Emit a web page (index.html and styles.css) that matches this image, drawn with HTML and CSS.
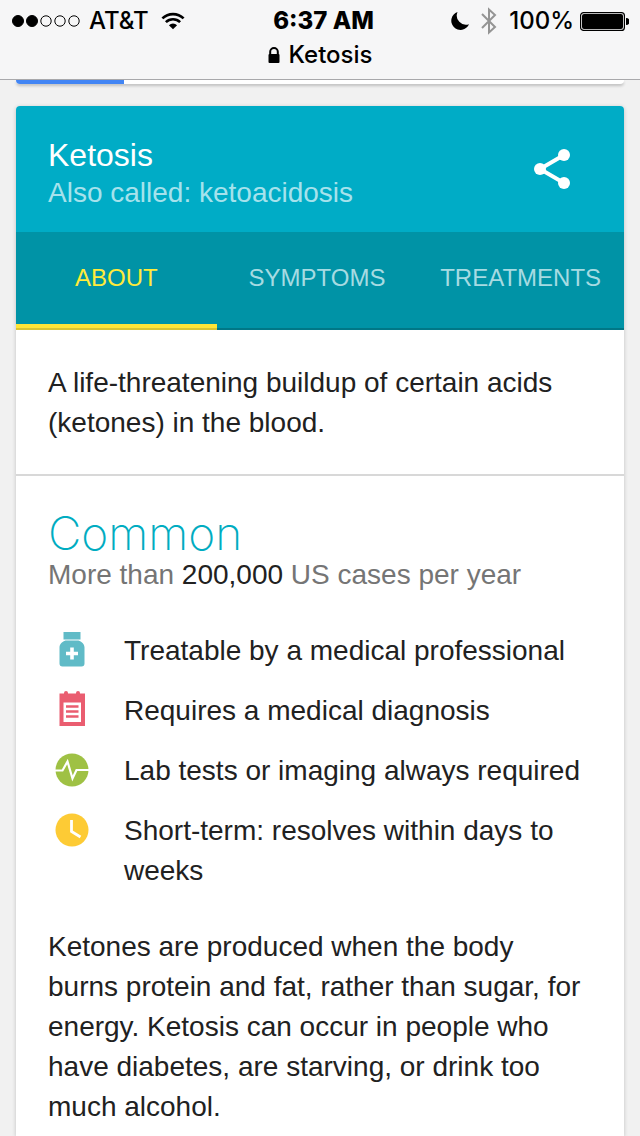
FILE: index.html
```html
<!DOCTYPE html>
<html lang="en">
  <head>
    <meta charset="UTF-8" />
    <meta name="viewport" content="width=device-width, initial-scale=1.0" />
    <title>Ketosis</title>
    <link rel="stylesheet" href="styles.css">
  </head>
  <body>
    <header class="topbar">
      <div class="status">
        <div class="status-left">
          <svg class="signal" width="68" height="12" viewBox="0 0 68 12" fill="none" stroke="#000">
            <circle cx="6" cy="6" r="5.5" fill="#000" />
            <circle cx="20" cy="6" r="5.5" fill="#000" />
            <circle cx="34" cy="6" r="5.2" />
            <circle cx="48" cy="6" r="5.2" />
            <circle cx="62" cy="6" r="5.2" />
          </svg>
          <span>AT&amp;T</span>
          <svg class="wifi" width="24" height="18" viewBox="0 0 26 18" fill="none" stroke="#000" stroke-width="2.8">
            <path d="M1.5 6.2a16.5 16.5 0 0 1 23 0" />
            <path d="M5.3 10.2a11 11 0 0 1 15.4 0" />
            <path d="M13 18l-4.4-4.5a6.4 6.4 0 0 1 8.8 0z" fill="#000" stroke="none" />
          </svg>
        </div>
        <time class="clock">6:37 AM</time>
        <div class="status-right">
          <svg width="18" height="18" viewBox="0 0 18 18">
            <path d="M6.5 0A9.2 9.2 0 1 0 18 12.2 9.2 9.2 0 0 1 6.5 0z" />
          </svg>
          <svg class="bluetooth" width="16" height="28" viewBox="0 0 16 28" fill="none" stroke="#949494" stroke-width="2">
            <path d="M1 7l13 13-6 5.500V2.500L14 8 1 21" />
          </svg>
          <span>100%</span>
          <svg class="battery" width="49" height="19" viewBox="0 0 49 19">
            <rect x=".6" y=".6" width="43.800" height="17.800" rx="3" fill="none" stroke="#000" stroke-width="1.200" />
            <rect x="2" y="2" width="41" height="15" rx="2" />
            <path d="M46 6a3.300 3.300 0 0 1 0 7z" />
          </svg>
        </div>
      </div>
      <div class="address">
        <svg width="12" height="16" viewBox="0 0 12 16">
          <path d="M2.200 8V4.800a3.800 3.800 0 0 1 7.600 0V8" fill="none" stroke="#000" stroke-width="2" />
          <rect x=".5" y="7" width="11" height="9" rx="1" />
        </svg>
        <span>Ketosis</span>
      </div>
    </header>

    <main>
      <div class="search-tabs"><div class="search-tabs-active"></div></div>

      <article class="card">
        <div class="card-head">
          <div>
            <h1>Ketosis</h1>
            <p class="alias">Also called: ketoacidosis</p>
          </div>
          <button class="share" type="button" aria-label="Share">
            <svg width="36" height="40" viewBox="0 0 36 40" fill="#fff">
              <path d="M30 6L6 20l24 14" fill="none" stroke="#fff" stroke-width="4" />
              <circle cx="30" cy="6" r="6" />
              <circle cx="6" cy="20" r="6" />
              <circle cx="30" cy="34" r="6" />
            </svg>
          </button>
        </div>

        <nav class="tabs">
          <a class="tab active" href="#about">ABOUT</a>
          <a class="tab" href="#symptoms">SYMPTOMS</a>
          <a class="tab" href="#treatments">TREATMENTS</a>
        </nav>

        <p class="summary">A life-threatening buildup of certain acids (ketones) in the blood.</p>

        <section class="details" id="about">
          <h2>Common</h2>
          <p class="cases">More than <span>200,000</span> US cases per year</p>
          <ul class="facts">
            <li>
              <svg width="32" height="36" viewBox="0 0 32 36">
                <path d="M7.500 1h17v7.500h-17zM9.500 9.500h13c3 1 6 3.500 6 7v16a3 3 0 0 1-3 3h-19a3 3 0 0 1-3-3v-16c0-3.500 3-6 6-7z" fill="#60bbc7" />
                <path d="M16 16.500v12M10 22.500h12" stroke="#fff" stroke-width="3.600" />
              </svg>
              <span>Treatable by a medical professional</span>
            </li>
            <li>
              <svg width="32" height="36" viewBox="0 0 32 36">
                <path d="M3.500 2.500H8V2a2 2 0 0 1 4 0v.5h8V2a2 2 0 0 1 4 0v.5h5v32.500H3.500z" fill="#ea5d70" />
                <path d="M7.500 11.500h17.500v19.500H7.500z" fill="#fff" />
                <path d="M10 15.500h12.500M10 20.500h12.500M10 25.500h12.500" stroke="#ea5d70" stroke-width="2.400" />
              </svg>
              <span>Requires a medical diagnosis</span>
            </li>
            <li>
              <svg width="32" height="36" viewBox="0 0 32 36">
                <circle cx="16" cy="19" r="16.500" fill="#9fc144" />
                <path d="M-1 19.500h7.500l5-9 5 17 4-8.500H33" fill="none" stroke="#fff" stroke-width="2.200" />
              </svg>
              <span>Lab tests or imaging always required</span>
            </li>
            <li>
              <svg width="32" height="36" viewBox="0 0 32 36">
                <circle cx="16" cy="19" r="16.500" fill="#fdcb35" />
                <path d="M15.500 9v11.500l9 5.500" fill="none" stroke="#fff" stroke-width="2.800" />
              </svg>
              <span>Short-term: resolves within days to weeks</span>
            </li>
          </ul>
          <p>Ketones are produced when the body burns protein and fat, rather than sugar, for energy. Ketosis can occur in people who have diabetes, are starving, or drink too much alcohol.</p>
        </section>
      </article>
    </main>
  </body>
</html>
```
FILE: styles.css
```css
* {
  box-sizing: border-box;
}
body {
  margin: 0;
  background-color: #f1f1f1;
  color: #212121;
  font-family: "Liberation Sans", Arial, sans-serif;
  font-size: 28px;
  line-height: 40px;
}
h1,
h2,
p,
ul {
  margin: 0;
  padding: 0;
}
.topbar {
  height: 80px;
  padding-top: 4px;
  background-color: #f6f6f7;
  border-bottom: 1px solid #a9a9ac;
  color: #000;
  font-family: Inter, sans-serif;
  font-size: 24px;
  font-weight: 500;
  line-height: 34px;
}
.status {
  display: grid;
  grid-template-columns: 1fr auto 1fr;
  align-items: center;
  padding: 0 11px 0 12px;
}
.status-left,
.status-right,
.address {
  display: flex;
  align-items: center;
  gap: 9px;
}
.wifi {
  margin-left: 3px;
}
.clock {
  margin-left: 6px;
  font-weight: 800;
}
.status-right {
  justify-content: flex-end;
}
.bluetooth {
  margin: 0 3px;
}
.battery {
  margin-left: -3px;
}
.address {
  justify-content: center;
}
main {
  padding: 0 16px;
}
.search-tabs {
  height: 4px;
  margin-bottom: 22px;
  background-color: #fff;
  border-radius: 0 0 4px 4px;
  box-shadow: 0 2px 3px rgba(0, 0, 0, 0.2);
  overflow: hidden;
}
.search-tabs-active {
  width: 108px;
  height: 4px;
  background-color: #4285f4;
}
.card {
  background-color: #fff;
  border-radius: 4px 4px 0 0;
  box-shadow: 0 1px 4px rgba(0, 0, 0, 0.2);
}
.card-head {
  display: flex;
  align-items: center;
  justify-content: space-between;
  padding: 29px 54px 21px 32px;
  background-color: #00acc6;
  border-radius: 4px 4px 0 0;
  color: #fff;
}
h1 {
  font-size: 32px;
  font-weight: 400;
  line-height: 40px;
}
.alias {
  color: #a6e2ec;
  line-height: 36px;
}
.share {
  display: flex;
  margin-bottom: 8px;
  padding: 0;
  border: 0;
  background: none;
}
.tabs {
  display: grid;
  grid-template-columns: 33fr 33fr 34fr;
  background-color: #0093a6;
  box-shadow: inset 0 -2px #007786;
}
.tab {
  height: 98px;
  color: #a6dbe2;
  font-size: 24px;
  line-height: 92px;
  text-align: center;
  text-decoration: none;
}
.tab.active {
  color: #ffeb3b;
  box-shadow: inset 0 -2px #d9c431, inset 0 -6px #ffe536;
}
.summary {
  padding: 33px 32px 31px;
  border-bottom: 2px solid #d8d8d8;
}
.details {
  padding: 32px 36px 9px 32px;
}
h2 {
  color: #00acc1;
  font-family: Inter, sans-serif;
  font-size: 46px;
  font-weight: 250;
  line-height: 50px;
}
.cases {
  color: #757575;
  line-height: 34px;
}
.cases span {
  color: #212121;
}
.facts {
  display: grid;
  gap: 20px;
  margin: 39px 0 36px;
  list-style: none;
}
.facts li {
  display: flex;
  gap: 36px;
  padding-left: 8px;
}
.facts svg {
  flex: none;
  overflow: visible;
}
```
